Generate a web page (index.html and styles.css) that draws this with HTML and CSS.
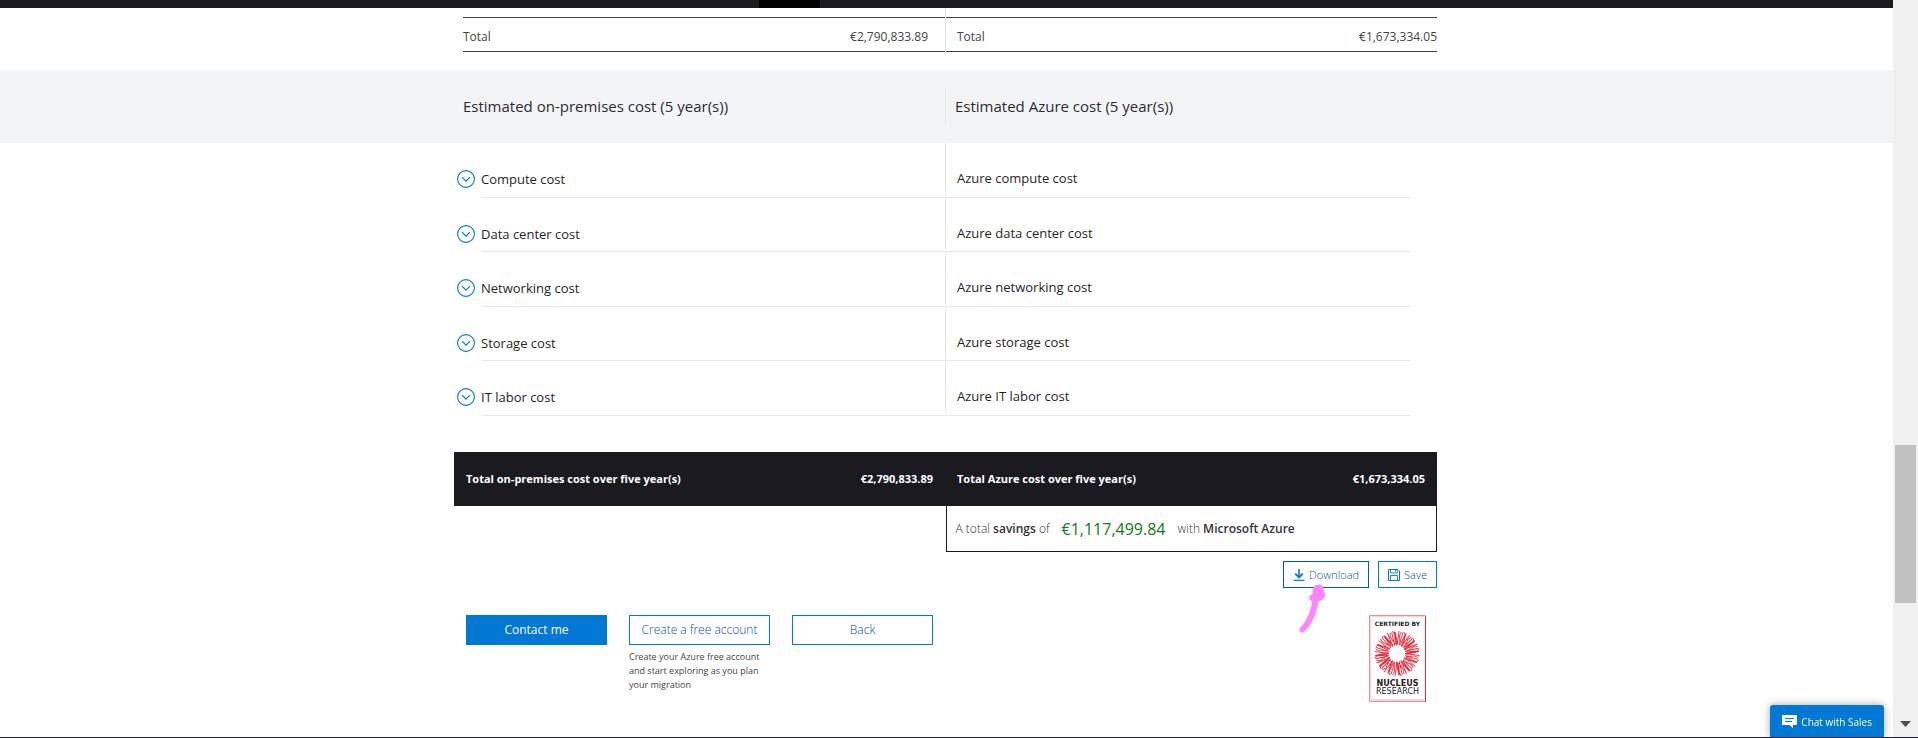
FILE: index.html
```html
<!DOCTYPE html>
<html lang="en">
<head>
<meta charset="utf-8">
<title>Total cost of ownership report</title>
<link rel="stylesheet" href="styles.css">
</head>
<body>
<svg class="defs" aria-hidden="true">
  <symbol id="chevron" viewBox="0 0 18 18">
    <circle cx="9" cy="9" r="8.4" fill="none" stroke="#0078d4" stroke-width="1.1"/>
    <path d="M5 7.2 9 11.2 13 7.2" fill="none" stroke="#0078d4" stroke-width="1.2"/>
  </symbol>
</svg>
<div class="page">
  <header class="topbar"><div class="topbar-tab"></div></header>
  <main>
    <section class="wrap">
      <div class="split">
        <div class="sub sub-left"><span>Total</span><span>€2,790,833.89</span></div>
        <div class="sub sub-right"><span>Total</span><span>€1,673,334.05</span></div>
      </div>
    </section>
    <section class="band">
      <div class="wrap">
        <div class="split">
          <h2 class="band-left">Estimated on-premises cost (5 year(s))</h2>
          <h2 class="band-right">Estimated Azure cost (5 year(s))</h2>
        </div>
      </div>
    </section>
    <section class="wrap">
      <div class="split cost"><button type="button" class="expand"><svg class="chev"><use href="#chevron"/></svg>Compute cost</button><div class="azure">Azure compute cost</div></div>
      <div class="split cost"><button type="button" class="expand"><svg class="chev"><use href="#chevron"/></svg>Data center cost</button><div class="azure">Azure data center cost</div></div>
      <div class="split cost"><button type="button" class="expand"><svg class="chev"><use href="#chevron"/></svg>Networking cost</button><div class="azure">Azure networking cost</div></div>
      <div class="split cost"><button type="button" class="expand"><svg class="chev"><use href="#chevron"/></svg>Storage cost</button><div class="azure">Azure storage cost</div></div>
      <div class="split cost"><button type="button" class="expand"><svg class="chev"><use href="#chevron"/></svg>IT labor cost</button><div class="azure">Azure IT labor cost</div></div>
    </section>
    <section class="wrap">
      <div class="split grand">
        <div class="sum"><span>Total on-premises cost over five year(s)</span><span>€2,790,833.89</span></div>
        <div class="sum"><span>Total Azure cost over five year(s)</span><span>€1,673,334.05</span></div>
      </div>
      <p class="savings"><span>A total <b>savings</b> of</span><strong class="amount">€1,117,499.84</strong><span>with <b>Microsoft Azure</b></span></p>
      <div class="tools">
        <button type="button" class="tool tool-active">
          <svg width="12" height="12" viewBox="0 0 12 12" fill="none" stroke="#0078d4"><path d="M6 0V8" stroke-width="1.6"/><path d="M2.2 4.6 6 8.4 9.8 4.6" stroke-width="1.8"/><path d="M.5 11.3H11.5" stroke-width="1.2"/></svg>Download
        </button>
        <button type="button" class="tool">
          <svg width="12" height="12" viewBox="0 0 12 12" fill="none" stroke="#0078d4"><path d="M.5.5H10L11.5 2V11.5H.5Z"/><path d="M2.5.5V4H9.2V.5M7.5.8V2.6M2.5 11.5V6.5H9.5V11.5" stroke-width=".9"/></svg>Save
        </button>
        <svg class="marker" width="28" height="50" viewBox="0 0 28 50" aria-hidden="true">
          <path d="M3.500 45.500C10 39 15.500 27 17 12" fill="none" stroke="#ff85ff" stroke-width="6" stroke-linecap="round"/>
          <path d="M15 2.500C18-.5 23-.5 24.500 4 24.500 8 26.500 9 26 12 25 16 21 17.500 17 17.500 13 18 10 16.500 10.500 13.500 11 11 14 10 14 8 13.500 6 13.500 4 15 2.500Z" fill="#ff85ff"/>
        </svg>
      </div>
      <div class="footer">
        <div class="actions">
          <div><button type="button" class="btn btn-primary">Contact me</button></div>
          <div><a href="#" class="btn">Create a free account</a><p class="note">Create your Azure free account and start exploring as you plan your migration</p></div>
          <div><button type="button" class="btn">Back</button></div>
        </div>
        <svg width="57" height="87" viewBox="0 0 57 87" role="img" aria-label="Certified by Nucleus Research">
          <path d="M.5.5H56.500V86.500H.5Z" fill="#fff" stroke="#f38b95"/>
          <path d="M1.500 85V1.500H55" fill="none" stroke="#fbd3d6"/>
          <path d="M1.500 85H55" stroke="#fbd3d6" stroke-width="2"/>
          <path d="M56.500 1V87" stroke="#ec2436"/>
          <text class="logo-bold" x="28.500" y="11" font-size="6">CERTIFIED BY</text>
          <defs>
            <path id="rays" d="M0-8 2-22.500M1-9-2-21.500M2-8 6-21M3-9 2.500-18 4.500-21.500M4-7 9-20M3.500-9 8-19 7-21.500" fill="none" stroke="#ec2436" stroke-width=".9"/>
          </defs>
          <g transform="translate(28 38.500)">
            <use href="#rays"/><use href="#rays" transform="rotate(30)"/><use href="#rays" transform="rotate(60)"/><use href="#rays" transform="rotate(90)"/><use href="#rays" transform="rotate(120)"/><use href="#rays" transform="rotate(150)"/><use href="#rays" transform="rotate(180)"/><use href="#rays" transform="rotate(210)"/><use href="#rays" transform="rotate(240)"/><use href="#rays" transform="rotate(270)"/><use href="#rays" transform="rotate(300)"/><use href="#rays" transform="rotate(330)"/>
            <circle r="8" fill="#fff"/>
          </g>
          <text class="logo-bold" x="28.500" y="71" font-size="8">NUCLEUS</text>
          <text class="logo-text" x="28.500" y="79" font-size="8">RESEARCH</text>
        </svg>
      </div>
    </section>
  </main>
  <button type="button" class="chat">
    <svg width="15" height="13" viewBox="0 0 15 13"><path d="M1 0H14Q15 0 15 1V9Q15 10 14 10H11V13L7.500 10H1Q0 10 0 9V1Q0 0 1 0Z" fill="#fff"/><path d="M3 3.500H12M3 6.500H10" stroke="#0078d4" stroke-width="1.200"/></svg>Chat with Sales
  </button>
</div>
<div class="scrollbar" aria-hidden="true">
  <div class="thumb"></div>
  <svg width="11" height="6" viewBox="0 0 11 6"><path d="M0 0H11L5.500 6Z" fill="#505050"/></svg>
</div>
<div class="edge"></div>
</body>
</html>
```
FILE: styles.css
```css
* { box-sizing: border-box; }
body {
  margin: 0;
  display: flex;
  min-height: 100vh;
  background: #fff;
  color: #444;
  font: 12px/16px "Open Sans", "Noto Sans", sans-serif;
}
h2, p { margin: 0; }
button { font: inherit; cursor: pointer; }
.defs { position: absolute; width: 0; height: 0; }
.page { flex: 1; min-width: 0; }

.topbar { display: flex; justify-content: center; height: 8px; background: #1b1a1f; padding-right: 314px; }
.topbar-tab { width: 61px; background: #000; }

.wrap { width: 100%; max-width: 985px; margin: 0 auto; padding-right: 2px; }
.split { display: grid; grid-template-columns: 491fr 492fr; }

.sub {
  display: flex;
  justify-content: space-between;
  align-items: center;
  height: 35px;
  margin: 9px 0 18px;
  padding-top: 4px;
  border: solid #404040;
  border-width: 1px 0;
}
.sub-left { margin-left: 9px; padding-right: 17px; }
.sub-right { padding-left: 12px; position: relative; }
.sub-right::before {
  content: "";
  position: absolute;
  left: 0;
  top: -10px;
  bottom: -1px;
  width: 1px;
  background: #e6e6e6;
}

.band { background: #f2f4f6; padding: 18px 0; }
.band h2 { font-size: 15px; font-weight: 400; line-height: 37px; color: #2b2b30; }
.band-left { padding-left: 9px; }
.band-right { padding-left: 9px; border-left: 1px solid #e8eaec; }

.cost { position: relative; height: 55px; padding-top: 18px; color: #1f1f24; font-size: 13px; font-weight: 500; }
.cost:nth-child(even) { height: 54px; }
.cost::before {
  content: "";
  position: absolute;
  left: calc(50% - 1px);
  top: 0;
  bottom: 2px;
  border-left: 1px solid #e8e8e8;
}
.cost::after {
  content: "";
  position: absolute;
  left: 27px;
  right: 27px;
  bottom: 0;
  border-top: 1px solid #e8e8e8;
}
.expand {
  display: flex;
  align-items: center;
  gap: 6px;
  height: 36px;
  padding: 0 0 0 3px;
  border: 0;
  background: none;
  color: inherit;
}
.chev { width: 18px; height: 18px; }
.azure { padding-left: 12px; line-height: 35px; }

.grand { margin-top: 36px; background: #1b1a1f; color: #fff; font-size: 11px; font-weight: 700; line-height: 54px; }
.sum { display: flex; justify-content: space-between; padding: 0 12px; }
.savings {
  display: flex;
  align-items: center;
  gap: 12px;
  width: 50%;
  height: 46px;
  margin-left: auto;
  padding-left: 9px;
  border: 1px solid #1b1a1f;
  border-top: 0;
  color: #333;
  font-weight: 300;
}
.savings b { font-weight: 600; }
.amount { color: #107c10; font-size: 16px; font-weight: 500; }

.tools { position: relative; display: flex; justify-content: flex-end; gap: 9px; margin-top: 9px; }
.tool {
  display: flex;
  align-items: center;
  gap: 4px;
  height: 27px;
  padding: 0 9px;
  border: 1px solid #0078d4;
  background: #fff;
  color: #0050a8;
  font-size: 11px;
  font-weight: 300;
}
.tool-active { border-color: #005a9e; }
.marker { position: absolute; right: 110px; top: 23px; }

.footer { display: flex; justify-content: space-between; align-items: flex-start; padding: 27px 11px 0 12px; }
.actions { display: grid; grid-template-columns: repeat(3, 141px); gap: 22px; }
.btn {
  display: block;
  width: 100%;
  height: 30px;
  padding: 0;
  border: 1px solid #0078d4;
  background: #fff;
  color: #0050a8;
  font-size: 12px;
  font-weight: 300;
  line-height: 28px;
  text-align: center;
  text-decoration: none;
}
.btn-primary { background: #0078d4; color: #fff; font-weight: 400; }
.note { margin-top: 5px; font-size: 9px; line-height: 14px; }
.logo-bold { font-family: "DejaVu Sans", sans-serif; font-weight: 700; text-anchor: middle; fill: #222; }
.logo-text { font-family: "DejaVu Sans", sans-serif; text-anchor: middle; fill: #222; }

.chat {
  position: fixed;
  right: 34px;
  bottom: 0;
  display: flex;
  align-items: center;
  gap: 4px;
  height: 33px;
  padding: 0 12px;
  border: 0;
  border-radius: 3px 3px 0 0;
  background: #0078d4;
  box-shadow: 0 0 8px rgba(0, 0, 0, .35);
  color: #fff;
  font-size: 10px;
}
.scrollbar {
  display: flex;
  flex-direction: column;
  justify-content: space-between;
  align-items: center;
  width: 25px;
  padding: 445px 0 11px;
  background: #f0f0f0;
}
.thumb { width: 21px; height: 158px; background: #c1c1c1; }
.edge { position: fixed; left: 0; right: 0; bottom: 0; height: 1px; background: #1f1d3d; }
```
